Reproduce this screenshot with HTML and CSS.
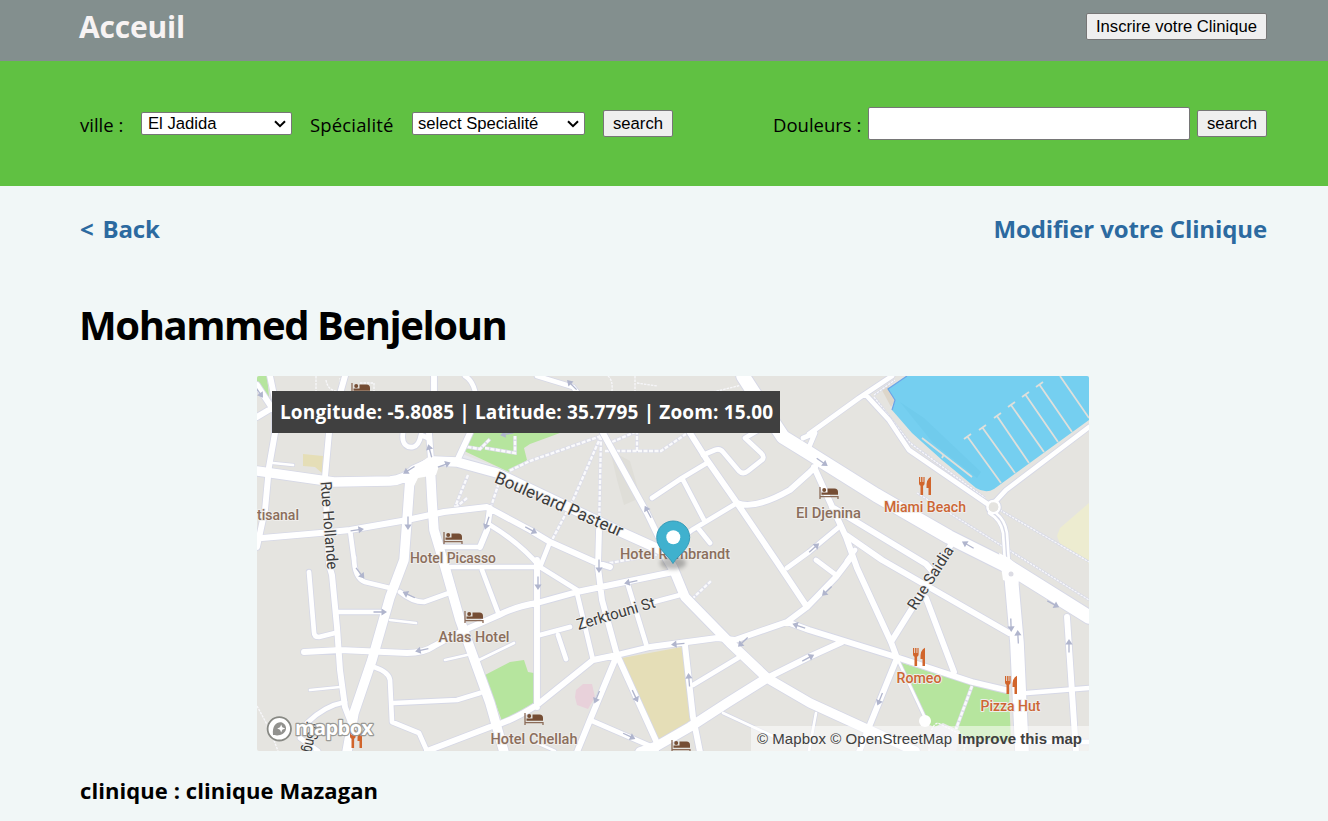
FILE: index.html
```html
<!DOCTYPE html>
<html lang="fr">
<head>
<meta charset="utf-8">
<title>Clinique</title>
<link rel="stylesheet" href="styles.css">
</head>
<body>
<header class="topbar">
  <a class="brand">Acceuil</a>
  <button class="btn">Inscrire votre Clinique</button>
</header>
<section class="searchbar">
  <form class="filters">
    <label class="lbl lbl-ville">ville :</label>
    <div class="select select-ville"><span>El Jadida</span><svg width="12" height="8" viewBox="0 0 12 8"><path d="M1 1.2 6 6.2 11 1.2" fill="none" stroke="#000" stroke-width="2"/></svg></div>
    <label class="lbl lbl-spec">Spécialité</label>
    <div class="select select-spec"><span>select Specialité</span><svg width="12" height="8" viewBox="0 0 12 8"><path d="M1 1.2 6 6.2 11 1.2" fill="none" stroke="#000" stroke-width="2"/></svg></div>
    <button class="btn btn-search" type="button">search</button>
  </form>
  <form class="pain">
    <label class="lbl lbl-pain">Douleurs :</label>
    <input class="field" type="text">
    <button class="btn btn-search" type="button">search</button>
  </form>
</section>
<main class="content">
  <nav class="links"><a class="back">&lt; Back</a><a class="edit">Modifier votre Clinique</a></nav>
  <h1 class="name">Mohammed Benjeloun</h1>
  <div class="map">
    <svg class="canvas" width="832" height="375" viewBox="257 376 832 375">
      <defs>
        <g id="arrow"><path d="M-6.500 0H4" fill="none" stroke="#b0b5cd" stroke-width="1.300"/><path d="M7 0 1.500-3.600V3.600Z" fill="#b0b5cd"/></g>
        <g id="bed"><path d="M-9-6V6M-9 3.600H9V6" fill="none" stroke="#8b6b58" stroke-width="1.300"/><path d="M-1.500-4.500H5.500Q9-4.500 9-1V1.800H-7.500V-.5H-1.500Z" fill="#754d34"/><circle cx="-4.800" cy="-3" r="2" fill="#754d34"/></g>
        <g id="food" fill="#d1652c"><path d="M-6-9h1.200v5h.9v-5h1.400v5h.9v-5H-.4v6.500Q-.5-.8-1.900-.3V9H-4.500V-.3Q-5.900-.8-6-2.500Z"/><path d="M6-9.200V9H3.500V2H1.500Q1-7 6-9.200Z"/></g>
        <path id="thin" d="M390 620 416 623M445 660 467 655M479 660 514 643M310 690 340 687M273 463 293 465M897 658 926 720M996 513Q1005 520 1007 533L1009 563M989 513Q1001 520 1003 533L1005 563M723 713 777 738M816 713 809 751M537 743 555 751"/>
        <path id="small" d="M866 395 889 420 909 450 989 505M1089 427 1006 490 994 503M807 452 815 433M809 434 859 398 892 376M803 438 815 433M577 593 593 660M558 635 566 659M628 585 647 647M450 567H537M482 570 499 615M444 547H480M337 612H387M354 557Q354 578 365 582L390 588M350 530 354 560M400 592Q412 602 424 602L449 593M309 572 314 632Q314 637 319 637L335 633M307 723Q324 706 345 702M374 667Q389 672 390 680L392 722 419 733 427 751M394 703 457 700 480 693M652 498 682 478 707 463M682 478 705 522M698 528 710 543M673 545 692 530 737 503M703 455 715 450Q720 448 723 452L739 471Q743 475 748 471L762 460Q765 457 761 453L745 438 757 431M540 635 570 627M650 603 680 595M693 685 738 658M590 720 657 749M490 525Q520 543 540 567L577 590M540 567 550 542M403 433C401 445 408 448 413 447S420 440 421 435L428 438M465 376Q472 380 475 391M537 376 573 387 580 396M839 527 809 552 787 568M816 560 836 575M847 561 855 550M1027 693 1089 688M1029 742H1089M300 738 318 751"/>
        <path id="medium" d="M257 385 272 408 257 417M275 400V433L269 467 265 510 257 547M262 538 320 533 350 530 407 520 444 512 487 507 530 530 550 542 597 563 610 567M270 376 275 400M345 376 329 433 325 477 329 565 332 575 337 627 340 670 345 707 350 720M434 376V391L429 433 431 460M490 508 487 530 480 547M470 433 457 461M304 652 340 650 407 653Q424 653 434 646L460 632 499 615Q517 606 537 603L577 592 673 572M537 560V707M427 751 490 727Q510 722 537 705L593 660 617 655 650 647 717 638 735 640 787 622 807 607 836 577 849 560M599 530 598 567 602 600 617 655 590 720 577 752M618 657 657 743M685 645 693 717 700 752M603 433 647 513 660 540 673 565M690 433 707 460 737 503 777 562 807 607M737 503Q755 510 790 490L809 473 815 467M814 467 829 500 846 537 857 568 891 642 897 658 869 727 859 752M787 622 809 630 896 657 972 682 1006 690M891 642 926 586 952 543M926 598 954 672M846 535 882 560 1009 633M832 507 926 564 933 572M1067 617 1076 752M767 678 809 657 842 642"/>
        <path id="large" d="M257 471 334 482 390 481Q405 480 414 470L434 461 457 462 497 473 623 533 663 551 673 568 685 597 730 643 767 678 810 703 869 730 915 751M410 478 407 520 404 560 390 597 372 660 354 713 347 752M430 462 432 500 434 530 445 567 460 620 490 703 504 752M640 752 657 746 690 727 727 703 767 678"/>
        <path id="major" d="M743 376 763 407 783 437 809 453 876 495 949 537 1009 567 1089 617M1011 575 1017 643 1022 752"/>
        <path id="coast-walk" d="M874 395 895 380M874 397 910 443 985 498M917 493 1089 600M1000 510 1089 562"/>
        <path id="footpaths" d="M601 436 530 461 509 471M601 436 573 500 552 540M601 436 599 530M605 451H661L686 434M612 442 640 430M637 451V433M467 498 455 508M468 475 455 507M502 473 490 510M462 446 480 449 490 439M485 448 515 453V436M692 599 711 581M972 686 956 729M604 564 672 552"/>
      </defs>
      <rect x="257" y="376" width="832" height="375" fill="#e5e4e0"/>
      <path d="M610 450 630 461 636 482 640 498 624 505 617 480Z" fill="#dfded8"/>
      <path d="M457 452 512 473 500 478 455 462Z" fill="#e8e9ee"/>
      <path d="M257 376H267L270 407 257 389ZM469 433H560L530 444 524 448 527 460 509 472 462 450ZM485 675 510 662 524 660 528 672 534 673V703L502 721ZM899 662 972 685 1009 693 1011 742 956 738 926 723Z" fill="#b6e59e"/>
      <path d="M932 728 943 723 960 731 956 751H929Z" fill="#e8e9ec"/>
      <path d="M622 658 682 647 692 720 659 740ZM303 454 323 456 322 473 315 467 303 466Z" fill="#e5deb7"/>
      <path d="M1089 503 1060 528 1057 536 1060 544 1089 564Z" fill="#edecd0"/>
      <path d="M576 690 583 684 592 684 595 697 588 709 577 705 575 697Z" fill="#e8d1da"/>
      <path d="M882 390 888 385 895 400 891 407Z" fill="#ddd6ca"/>
      <path d="M907 376 888 389 895 400 892 410 912 433 942 460 976 488Q986 494 994 489L1089 420V376Z" fill="#75cff0"/>
      <path d="M900 402 924 418 981 472 977 478 934 444Z" fill="#70cbec"/>
      <path d="M907 376 888 389 895 400 892 410" fill="none" stroke="#6ba4e8" stroke-width="1.200"/>
      <path d="M967 436 1001 483M982 427 1015 473M997 416 1029 463M1011 405 1044 452M1025 394 1058 442M1039 384 1072 432M1060 376 1089 418M964 439 971 434M979 430 986 425M994 418 1001 413M1008 407 1015 402M1022 397 1029 392M1036 387 1043 382M922 438 972 477M942 458 944 454" fill="none" stroke="#dedfdb" stroke-width="1.800"/>
      <g class="walks">
        <use href="#footpaths" class="walk-edge"/>
        <use href="#footpaths" class="walk-dash"/>
        <path class="walk-fine" d="M316 376V391M326 380Q328 392 340 391V378M360 383H374V391M608 376Q613 380 612 391M635 376V391M637 383 657 386M713 392 742 385M257 706 270 730 278 751M929 751Q929 725 938 723L966 737 964 751"/>
        <use href="#coast-walk" class="coast-edge"/>
        <use href="#coast-walk" class="walk-fine"/>
      </g>
      <g class="casing">
        <use href="#thin" stroke-width="4.200"/><use href="#small" stroke-width="6.400"/><use href="#medium" stroke-width="7.600"/><use href="#large" stroke-width="11.200"/><use href="#major" stroke-width="15.500"/>
        <circle cx="993.500" cy="507" r="6" stroke-width="4.500"/>
      </g>
      <g class="road">
        <use href="#thin" stroke-width="2.700"/><use href="#small" stroke-width="4.700"/><use href="#medium" stroke-width="5.900"/><use href="#large" stroke-width="9.500"/><use href="#major" stroke-width="13.600"/>
        <circle cx="993.500" cy="507" r="6" stroke-width="2.500"/>
      </g>
      <circle cx="993.500" cy="507" r="4.800" fill="#e5e4e0"/>
      <path d="M403 480 409 470 430 456 440 463 436 475 418 478 412 490Z" fill="#fff"/>
      <circle cx="925" cy="721" r="6" fill="#fff"/>
      <path d="M999 553 1009 558 1021 568 1018 585 1003 580Z" fill="#fff"/>
      <circle cx="1011" cy="574" r="2.500" fill="#dcdce4"/>
      <use href="#arrow" transform="translate(409 470) rotate(148)"/>
      <use href="#arrow" transform="translate(444 465) rotate(-20)"/>
      <use href="#arrow" transform="translate(430 451) rotate(-105)"/>
      <use href="#arrow" transform="translate(357 530) rotate(-8)"/>
      <use href="#arrow" transform="translate(408 523) rotate(90)"/>
      <use href="#arrow" transform="translate(487 523) rotate(108)"/>
      <use href="#arrow" transform="translate(531 530) rotate(28)"/>
      <use href="#arrow" transform="translate(572 385) rotate(-135)"/>
      <use href="#arrow" transform="translate(507 434) rotate(170)"/>
      <use href="#arrow" transform="translate(259 392) rotate(55)"/>
      <use href="#arrow" transform="translate(648 512) rotate(-118)"/>
      <use href="#arrow" transform="translate(599 566) rotate(90)"/>
      <use href="#arrow" transform="translate(538 583) rotate(90)"/>
      <use href="#arrow" transform="translate(360 573) rotate(52)"/>
      <use href="#arrow" transform="translate(409 595) rotate(-155)"/>
      <use href="#arrow" transform="translate(380 612)"/>
      <use href="#arrow" transform="translate(422 650) rotate(168)"/>
      <use href="#arrow" transform="translate(631 582) rotate(168)"/>
      <use href="#arrow" transform="translate(678 644) rotate(174)"/>
      <use href="#arrow" transform="translate(689 680) rotate(-95)"/>
      <use href="#arrow" transform="translate(597 697) rotate(112)"/>
      <use href="#arrow" transform="translate(635 696) rotate(65)"/>
      <use href="#arrow" transform="translate(629 736) rotate(25)"/>
      <use href="#arrow" transform="translate(743 642) rotate(136)"/>
      <use href="#arrow" transform="translate(799 626) rotate(-162)"/>
      <use href="#arrow" transform="translate(808 658) rotate(-28)"/>
      <use href="#arrow" transform="translate(827 591) rotate(136)"/>
      <use href="#arrow" transform="translate(822 462) rotate(35)"/>
      <use href="#arrow" transform="translate(814 548) rotate(-42)"/>
      <use href="#arrow" transform="translate(968 545) rotate(-150)"/>
      <use href="#arrow" transform="translate(1053 604) rotate(28)"/>
      <use href="#arrow" transform="translate(1011 625) rotate(88)"/>
      <use href="#arrow" transform="translate(1018 637) rotate(-93)"/>
      <use href="#arrow" transform="translate(1069 646) rotate(-90)"/>
      <use href="#arrow" transform="translate(880 699) rotate(112)"/>
      <use href="#bed" x="361" y="389"/><use href="#bed" x="453" y="538"/><use href="#bed" x="474" y="617"/><use href="#bed" x="534" y="719"/><use href="#bed" x="681" y="746"/><use href="#bed" x="829" y="493"/>
      <use href="#food" x="925" y="486"/><use href="#food" x="919" y="657"/><use href="#food" x="1011" y="685"/><use href="#food" x="356" y="739"/>
      <g class="poi">
        <text x="257" y="519.500" textLength="42" lengthAdjust="spacingAndGlyphs">tisanal</text>
        <text x="410" y="562.500" textLength="86" lengthAdjust="spacingAndGlyphs">Hotel Picasso</text>
        <text x="438.500" y="642" textLength="71" lengthAdjust="spacingAndGlyphs">Atlas Hotel</text>
        <text x="490.500" y="744" textLength="87" lengthAdjust="spacingAndGlyphs">Hotel Chellah</text>
        <text x="620" y="559" textLength="110" lengthAdjust="spacingAndGlyphs">Hotel Rembrandt</text>
        <text x="796" y="518" textLength="65" lengthAdjust="spacingAndGlyphs">El Djenina</text>
        <g class="eat">
          <text x="884" y="511.500" textLength="82" lengthAdjust="spacingAndGlyphs">Miami Beach</text>
          <text x="896.500" y="682.500" textLength="45" lengthAdjust="spacingAndGlyphs">Romeo</text>
          <text x="980.500" y="711" textLength="60" lengthAdjust="spacingAndGlyphs">Pizza Hut</text>
        </g>
      </g>
      <g class="street">
        <text transform="translate(493.500 482) rotate(23.500)" textLength="138" lengthAdjust="spacingAndGlyphs" class="big">Boulevard Pasteur</text>
        <text transform="translate(320.500 482) rotate(85.500)" textLength="88" lengthAdjust="spacingAndGlyphs">Rue Hollande</text>
        <text transform="translate(578.500 630) rotate(-16.500)" textLength="81" lengthAdjust="spacingAndGlyphs">Zerktouni St</text>
        <text transform="translate(915.500 611) rotate(-57.500)" textLength="72" lengthAdjust="spacingAndGlyphs">Rue Saidia</text>
        <text transform="translate(310 722) rotate(103)" textLength="30" lengthAdjust="spacingAndGlyphs">y Sng</text>
      </g>
      <ellipse cx="673" cy="563" rx="13" ry="6.500" class="shade"/>
      <path d="M673 563.500C669 556 656.700 549 656.700 537.500A16.500 16.500 0 0 1 689.700 537.500C689.700 549 677 556 673 563.500Z" fill="#3fb1ce" stroke="#369bb8" stroke-width="1"/>
      <circle cx="673.300" cy="537.300" r="7" fill="#fff"/>
      <g class="logo">
        <circle cx="279.300" cy="728.800" r="11.700" fill="#fff" stroke="#888984" stroke-width="1.800"/>
        <path d="M273 735C272 725 277 721.500 282 722.500 289 726 286 734 280 735 277 736 274 735 273 735Z" fill="#92928f"/>
        <path d="M281.200 724.500 282.300 727.300 285.200 728.500 282.300 729.700 281.200 732.500 280 729.700 277.200 728.500 280 727.300Z" fill="#fff"/>
        <text x="295" y="735" textLength="78">mapbox</text>
      </g>
    </svg>
    <div class="coords">Longitude: -5.8085 | Latitude: 35.7795 | Zoom: 15.00</div>
    <div class="credit"><span class="sources">© Mapbox © OpenStreetMap</span><b>Improve this map</b></div>
  </div>
  <h3 class="clinic">clinique : clinique Mazagan</h3>
</main>
</body>
</html>
```
FILE: styles.css
```css
* { box-sizing: border-box; }
body { margin: 0; height: 821px; overflow: hidden; background: #f1f7f7; color: #000; font-family: "Open Sans", "Noto Sans", sans-serif; font-size: 18px; }
.topbar { height: 61px; padding: 0 61px 0 79px; background: #838f8e; display: flex; justify-content: space-between; align-items: flex-start; }
.brand { color: #f7f3f3; font-size: 30px; font-weight: 700; line-height: 54px; letter-spacing: -0.2px; }
.btn { height: 27px; padding: 0 8px; border: 1px solid #767676; border-radius: 2px; background: #efefef; color: #000; font: 16.670px/24px "Liberation Sans", Arial, sans-serif; white-space: nowrap; }
.topbar .btn { width: 181px; margin-top: 13px; }
.searchbar { height: 125px; padding: 0 61px 0 80px; background: #60c142; display: flex; justify-content: space-between; }
.filters, .pain { display: flex; height: 125px; align-items: center; }
.lbl { font-size: 18.500px; line-height: 24px; margin-top: 3px; white-space: nowrap; }
.lbl-ville { width: 61px; }
.lbl-spec { width: 102px; letter-spacing: .15px; }
.lbl-pain { width: 95px; }
.select { height: 23px; border: 1px solid #767676; border-radius: 2px; background: #fff; padding: 0 5px 0 6px; display: flex; align-items: center; justify-content: space-between; font: 16.670px/20px "Liberation Sans", Arial, sans-serif; }
.select-ville { width: 151px; margin-right: 18px; }
.select-spec { width: 173px; margin-right: 18px; padding-left: 5px; }
.btn-search { width: 70px; }
.field { width: 322px; height: 33px; margin: 0 7px 0 0; border: 1px solid #767676; border-radius: 2px; background: #fff; }
.content { padding: 0 61px 0 80px; }
.links { height: 86px; display: flex; justify-content: space-between; font-size: 24px; font-weight: 700; line-height: 86px; color: #2c6aa0; }
.back { word-spacing: 3px; letter-spacing: -.2px; }
.edit { letter-spacing: -.12px; }
.name { margin: 25px 0 0 -1px; height: 56px; font-size: 40px; line-height: 55px; font-weight: 700; letter-spacing: -1.420px; white-space: nowrap; }
.map { position: relative; width: 832px; height: 375px; margin: 23px 0 0 177px; overflow: hidden; border-radius: 2px; }
.canvas { display: block; }
.coords { position: absolute; left: 15px; top: 15px; width: 508px; height: 42px; padding-left: 8px; background: #404040; color: #fff; font-size: 19px; font-weight: 700; line-height: 43px; letter-spacing: .14px; white-space: nowrap; }
.credit { position: absolute; right: 0; bottom: 0; width: 338px; height: 25px; padding: 0 7px 0 6px; display: flex; justify-content: space-between; background: rgba(255, 255, 255, .5); color: #404040; font: 15px/26px "Liberation Sans", Arial, sans-serif; white-space: nowrap; }
.sources { letter-spacing: .05px; }
.clinic { margin: 22px 0 0; font-size: 22px; line-height: 34px; font-weight: 700; letter-spacing: .07px; white-space: nowrap; }
.walks { fill: none; }
.walk-edge { stroke: #dcdde8; stroke-width: 3.600; }
.walk-dash { stroke: #fafafc; stroke-width: 2.400; stroke-dasharray: 4 1.500; }
.walk-fine { stroke: #f7f7fa; stroke-width: 1.300; stroke-dasharray: 2.500 1; }
.coast-edge { stroke: #d8dae6; stroke-width: 2.600; }
.casing { fill: none; stroke: #d6d8e6; stroke-linecap: round; stroke-linejoin: round; }
.road { fill: none; stroke: #fff; stroke-linecap: round; stroke-linejoin: round; }
.poi text, .street text { font-family: Roboto, sans-serif; font-size: 14.500px; paint-order: stroke; stroke: #efeeec; stroke-width: 2px; stroke-linejoin: round; }
.poi text { fill: #8b6e5c; font-weight: 500; }
.poi .eat text { fill: #cc6634; }
.street text { fill: #3c3c3c; font-size: 15.500px; }
.street .big { font-size: 17px; }
.shade { fill: #555; opacity: .4; filter: blur(2px); }
.logo text { font: 700 20px "Open Sans", sans-serif; fill: #fff; stroke: #9a9a96; stroke-width: 2.400px; paint-order: stroke; stroke-linejoin: round; }
```
